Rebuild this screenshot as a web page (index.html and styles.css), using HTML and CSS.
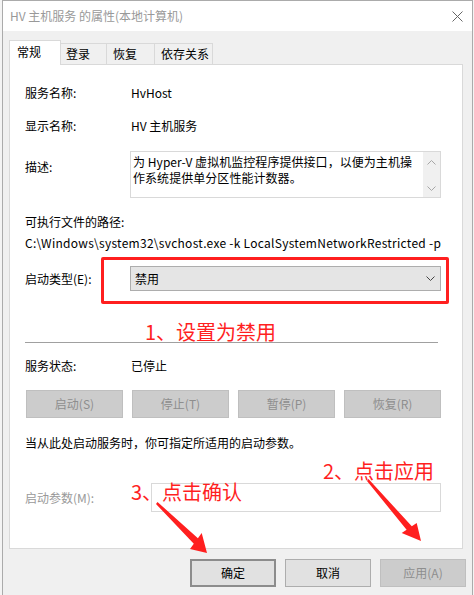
FILE: index.html
```html
<!DOCTYPE html>
<html lang="zh-CN">
<head>
<meta charset="utf-8">
<title>HV 主机服务 的属性(本地计算机)</title>
<link rel="stylesheet" href="styles.css">
</head>
<body>
<div class="window">
  <div class="titlebar">
    <span class="title">HV 主机服务 的属性(本地计算机)</span>
    <svg class="close" width="11" height="11" viewBox="0 0 11 11"><path d="M0.5 0.5 L10.5 10.5 M10.5 0.5 L0.5 10.5" stroke="#666" stroke-width="1" fill="none"/></svg>
  </div>
  <div class="main">
    <div class="tabs">
      <div class="tab active t1">常规</div>
      <div class="tab t2">登录</div>
      <div class="tab t3">恢复</div>
      <div class="tab t4">依存关系</div>
    </div>
    <div class="panel">
      <div class="row">
        <div class="lbl">服务名称:</div>
        <div class="val">HvHost</div>
      </div>
      <div class="row gap17">
        <div class="lbl">显示名称:</div>
        <div class="val">HV 主机服务</div>
      </div>
      <div class="row gap17">
        <div class="lbl lbl-desc">描述:</div>
        <div class="descbox">
          <div class="desctext">为 Hyper-V 虚拟机监控程序提供接口，以便为主机操<br>作系统提供单分区性能计数器。</div>
          <div class="vscroll">
            <svg width="9" height="5" viewBox="0 0 9 5"><polyline points="0.5,4.5 4.5,0.5 8.5,4.5" stroke="#a6a6a6" fill="none"/></svg>
            <svg width="9" height="5" viewBox="0 0 9 5"><polyline points="0.5,0.5 4.5,4.5 8.5,0.5" stroke="#a6a6a6" fill="none"/></svg>
          </div>
        </div>
      </div>
      <div class="line gap16">可执行文件的路径:</div>
      <div class="line path">C:\Windows\system32\svchost.exe -k LocalSystemNetworkRestricted -p</div>
      <div class="row center combo-row">
        <div class="lbl">启动类型(E):</div>
        <div class="combo">
          <span>禁用</span>
          <svg width="9" height="5" viewBox="0 0 9 5"><polyline points="0.5,0.5 4.5,4.5 8.5,0.5" stroke="#444" fill="none"/></svg>
        </div>
      </div>
      <div class="sep"></div>
      <div class="row status-row">
        <div class="lbl">服务状态:</div>
        <div class="val">已停止</div>
      </div>
      <div class="svc-buttons">
        <div class="btn disabled">启动(S)</div>
        <div class="btn disabled">停止(T)</div>
        <div class="btn disabled">暂停(P)</div>
        <div class="btn disabled">恢复(R)</div>
      </div>
      <div class="line hint">当从此处启动服务时，你可指定所适用的启动参数。</div>
      <div class="row center param-row">
        <div class="lbl lbl-param">启动参数(M):</div>
        <div class="param-input"></div>
      </div>
    </div>
    <div class="footer">
      <div class="btn default">确定</div>
      <div class="btn normal">取消</div>
      <div class="btn disabled">应用(A)</div>
    </div>
  </div>
</div>

<div class="annot">
  <div class="redbox"></div>
  <div class="note n1">1、设置为禁用</div>
  <div class="note n2">2、点击应用</div>
  <div class="note n3">3、点击确认</div>
  <svg class="arrows" width="474" height="595" viewBox="0 0 474 595">
    <polygon points="157.5,502 197.9,538.2 201.7,533 207,553 190,549 193.8,543.8 156,504" fill="#ff1f1f"/>
    <polygon points="368.5,479 411.8,526.3 416.7,523 421,541 401.7,533 406.6,529.8 367,481" fill="#ff1f1f"/>
  </svg>
</div>
</body>
</html>
```

FILE: styles.css
```css
html, body {
  margin: 0;
  padding: 0;
}

body {
  width: 474px;
  height: 595px;
  overflow: hidden;
  position: relative;
  background: #f4f4f4;
  font-family: "Noto Sans CJK SC", "Microsoft YaHei", sans-serif;
  font-size: 12px;
  color: #000;
}

.window {
  margin-left: 2px;
  width: 471px;
  height: 600px;
  box-sizing: border-box;
  border: 1px solid #ababab;
  border-bottom: none;
  background: #f0f0f0;
}

.titlebar {
  height: 30px;
  background: #fff;
  display: flex;
  align-items: center;
  justify-content: space-between;
  padding: 0 9px 0 7px;
}

.title {
  color: #999;
  line-height: 16px;
}

.close {
  display: block;
}

.main {
  padding: 9px 0 0 6px;
}

.tabs {
  display: flex;
  align-items: flex-end;
  height: 24px;
  position: relative;
  z-index: 1;
}

.tab {
  height: 21px;
  box-sizing: border-box;
  border: 1px solid #d9d9d9;
  border-bottom: none;
  margin-left: -1px;
  padding-left: 5px;
  line-height: 20px;
  background: #f0f0f0;
}

.tab.active {
  height: 25px;
  margin-left: 0;
  margin-bottom: -1px;
  background: #fff;
  padding-left: 7px;
  line-height: 22px;
}

.t1 { width: 52px; }
.t2 { width: 47px; }
.t3 { width: 49px; padding-left: 6px; }
.t4 { width: 59px; padding-left: 6px; }

.panel {
  width: 454px;
  height: 485px;
  box-sizing: border-box;
  border: 1px solid #d9d9d9;
  background: #fff;
  padding: 20px 21px 0 15px;
}

.row {
  display: flex;
  line-height: 16px;
}

.row.center {
  align-items: center;
}

.line {
  line-height: 16px;
  white-space: nowrap;
}

.gap17 { margin-top: 17px; }
.gap16 { margin-top: 16px; }

.lbl {
  width: 105px;
  flex: none;
}

.val {
  padding-left: 1px;
}

.lbl-desc {
  padding-top: 8px;
}

.descbox {
  width: 311px;
  height: 47px;
  box-sizing: border-box;
  border: 1px solid #d9d9d9;
  display: flex;
  background: #fff;
}

.desctext {
  flex: 1;
  padding: 2px 0 0 2px;
  line-height: 16px;
  white-space: nowrap;
  letter-spacing: 0.05px;
}

.vscroll {
  width: 17px;
  flex: none;
  background: #f0f0f0;
  display: flex;
  flex-direction: column;
  align-items: center;
  justify-content: space-between;
  padding: 8px 0 6px;
  box-sizing: border-box;
}

.vscroll svg {
  display: block;
}

.path {
  margin-top: 5px;
  letter-spacing: 0.27px;
}

.combo-row {
  margin-top: 15px;
}

.combo {
  width: 311px;
  height: 25px;
  box-sizing: border-box;
  border: 1px solid #adadad;
  background: #e5e5e5;
  display: flex;
  align-items: center;
  justify-content: space-between;
  padding: 0 5px 0 4px;
}

.combo svg {
  display: block;
}

.sep {
  margin-top: 51px;
  width: 413px;
  height: 1px;
  background: #a0a0a0;
}

.status-row {
  margin-top: 15px;
}

.svc-buttons {
  margin-top: 16px;
  margin-left: 1px;
  width: 415px;
  display: flex;
  justify-content: space-between;
}

.btn {
  height: 28px;
  box-sizing: border-box;
  display: flex;
  align-items: center;
  justify-content: center;
  line-height: 16px;
}

.svc-buttons .btn {
  width: 97px;
}

.btn.disabled {
  background: #cccccc;
  border: 1px solid #bfbfbf;
  color: #8e8e8e;
}

.btn.normal {
  background: #e1e1e1;
  border: 1px solid #adadad;
}

.btn.default {
  background: #e1e1e1;
  border: 2px solid #8c8c8c;
}

.hint {
  margin-top: 17px;
}

.param-row {
  margin-top: 32px;
}

.lbl-param {
  width: 126px;
  color: #999;
}

.param-input {
  width: 291px;
  height: 29px;
  box-sizing: border-box;
  border: 1px solid #d9d9d9;
  background: #fff;
}

.footer {
  margin-top: 10px;
  padding-right: 6px;
  display: flex;
  justify-content: flex-end;
  gap: 9px;
}

.footer .btn {
  width: 86px;
}

/* annotations overlay */
.annot {
  position: absolute;
  left: 0;
  top: 0;
  width: 474px;
  height: 595px;
  pointer-events: none;
}

.arrows {
  position: absolute;
  left: 0;
  top: 0;
}

.redbox {
  position: absolute;
  left: 101px;
  top: 257px;
  width: 348px;
  height: 47px;
  box-sizing: border-box;
  border: 3px solid #ff1f1f;
  border-radius: 2px;
}

.note {
  position: absolute;
  color: #ff1f1f;
  font-size: 20px;
  line-height: 20px;
  white-space: nowrap;
}

.n1 { left: 145px; top: 322px; }
.n2 { left: 323px; top: 461px; }
.n3 { left: 131px; top: 482px; }
```
